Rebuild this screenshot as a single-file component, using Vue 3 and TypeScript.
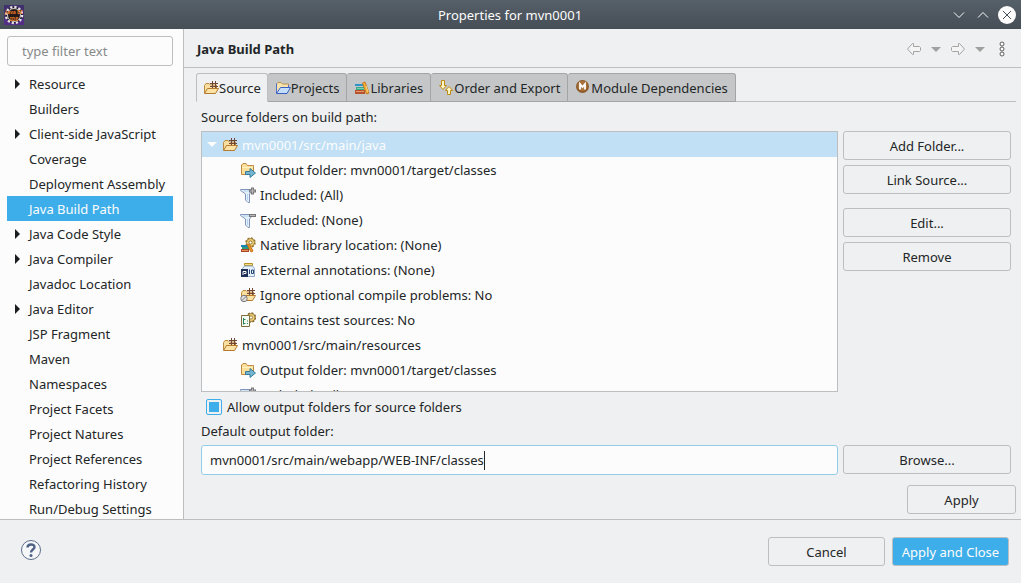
<script setup lang="ts">
import { ref } from 'vue'

interface Category {
  label: string
  expandable?: boolean
}

interface Tab {
  label: string
  icon: string
}

interface TreeRow {
  id: number
  label: string
  icon: string
  level: number
  open?: boolean
}

const categories: Category[] = [
  { label: 'Resource', expandable: true },
  { label: 'Builders' },
  { label: 'Client-side JavaScript', expandable: true },
  { label: 'Coverage' },
  { label: 'Deployment Assembly' },
  { label: 'Java Build Path' },
  { label: 'Java Code Style', expandable: true },
  { label: 'Java Compiler', expandable: true },
  { label: 'Javadoc Location' },
  { label: 'Java Editor', expandable: true },
  { label: 'JSP Fragment' },
  { label: 'Maven' },
  { label: 'Namespaces' },
  { label: 'Project Facets' },
  { label: 'Project Natures' },
  { label: 'Project References' },
  { label: 'Refactoring History' },
  { label: 'Run/Debug Settings' },
]

const tabs: Tab[] = [
  { label: 'Source', icon: 'source' },
  { label: 'Projects', icon: 'projects' },
  { label: 'Libraries', icon: 'books' },
  { label: 'Order and Export', icon: 'order' },
  { label: 'Module Dependencies', icon: 'module' },
]

const rows: TreeRow[] = [
  { id: 1, label: 'mvn0001/src/main/java', icon: 'source', level: 1, open: true },
  { id: 2, label: 'Output folder: mvn0001/target/classes', icon: 'output', level: 2 },
  { id: 3, label: 'Included: (All)', icon: 'included', level: 2 },
  { id: 4, label: 'Excluded: (None)', icon: 'excluded', level: 2 },
  { id: 5, label: 'Native library location: (None)', icon: 'native', level: 2 },
  { id: 6, label: 'External annotations: (None)', icon: 'annotations', level: 2 },
  { id: 7, label: 'Ignore optional compile problems: No', icon: 'ignore', level: 2 },
  { id: 8, label: 'Contains test sources: No', icon: 'tests', level: 2 },
  { id: 9, label: 'mvn0001/src/main/resources', icon: 'source', level: 1 },
  { id: 10, label: 'Output folder: mvn0001/target/classes', icon: 'output', level: 2 },
  { id: 11, label: 'Included: (All)', icon: 'included', level: 2 },
]

const filter = ref('')
const category = ref('Java Build Path')
const activeTab = ref('Source')
const selectedRow = ref(1)
const allowOutput = ref(true)
const outputFolder = ref('mvn0001/src/main/webapp/WEB-INF/classes')
</script>

<template>
  <div class="dialog">
    <svg class="defs" width="0" height="0" aria-hidden="true">
      <symbol id="i-source" viewBox="0 0 16 16">
        <path d="M1.500 13V5.500L3 3.500H6L7.500 5H13.500V9" fill="#f8dfa0" stroke="#bd8a3e" />
        <path d="M9.500 1V8M12.500 1V8M7 3.500H15M7 6.500H15" stroke="#70483a" fill="none" />
        <path d="M1.500 13.500L4.500 8.500H15.500L12.500 13.500Z" fill="#fbe3a6" stroke="#b37a30" />
      </symbol>
      <symbol id="i-projects" viewBox="0 0 16 16">
        <path d="M1.500 13V4L3 2.500H6L7.500 4H13.500V8" fill="#f6e3ad" stroke="#b9924e" />
        <path d="M1.500 3.500V13M13.500 5V8" stroke="#4d6fc4" fill="none" />
        <path d="M1.500 13.500L5.500 7.500H15.500L12 13.500Z" fill="#c5dffa" stroke="#3a5fc0" />
      </symbol>
      <symbol id="i-books" viewBox="0 0 16 16">
        <path d="M1 4H9V6H1Z" fill="#3192c8" />
        <path d="M2 7H10V10H2Z" fill="#36a88b" />
        <path d="M1 10H11V14H1Z" fill="#b5532f" />
        <path d="M2 11.500H10" stroke="#e99863" />
        <path d="M3 8.500H10" stroke="#7dd0ae" />
        <path d="M8.500 3L11 2L15 13L12.500 14Z" fill="#f2b13a" stroke="#c57b21" />
        <path d="M12 6L14 12" stroke="#f7d37a" />
      </symbol>
      <symbol id="i-order" viewBox="0 0 16 16">
        <path d="M3.500 .5H6.500V5.500H8.500L5 9.500L1.500 5.500H3.500Z" fill="#fff4c2" stroke="#bd8b18" />
        <path d="M9.500 14.500H12.500V10.500H14.800L11 6.500L7.300 10.500H9.500Z" fill="#fff4c2" stroke="#bd8b18" />
      </symbol>
      <symbol id="i-module" viewBox="0 0 16 16">
        <circle cx="7.500" cy="6.500" r="6.500" fill="#8d5a28" />
        <circle cx="7.500" cy="6" r="5" fill="#a9733c" />
        <path d="M5 9.500V4L7.500 7L10 4V9.500" fill="none" stroke="#fff" stroke-width="1.800" />
      </symbol>
      <symbol id="i-output" viewBox="0 0 16 16">
        <path d="M1.500 12.500V3L3 1.500H6L7.500 3.500H13.500V12.500Z" fill="#fbdf98" stroke="#c08b40" />
        <path d="M2 5.500H13" stroke="#fdf0c4" />
        <path d="M5.500 9.500H10V6.500L15.500 11L10 15.500V12.500H5.500Z" fill="#75b5d0" stroke="#397d9e" />
      </symbol>
      <symbol id="i-funnel" viewBox="0 0 16 16">
        <path d="M.5 2.500H12.500V3.500L9.500 7V15.500H8L5.500 13V7L.5 3.500Z" fill="#e4f0fb" stroke="#8294bb" />
        <path d="M7.500 7V13M3 4H9" stroke="#b4d4ee" fill="none" />
      </symbol>
      <symbol id="i-included" viewBox="0 0 16 16">
        <use href="#i-funnel" />
        <path d="M12.500 .5V7.500M9 4H16" stroke="#777" stroke-width="3" />
        <path d="M12.500 1.500V6.500M10 4H15" stroke="#b8b8b8" />
      </symbol>
      <symbol id="i-excluded" viewBox="0 0 16 16">
        <use href="#i-funnel" />
        <path d="M9 3.500H16" stroke="#777" stroke-width="3" />
        <path d="M10 3.500H15" stroke="#b8b8b8" />
      </symbol>
      <symbol id="i-native" viewBox="0 0 16 16">
        <circle cx="10.500" cy="5.500" r="4" fill="#ecd27c" stroke="#a5873f" />
        <circle cx="10.500" cy="5.500" r="4.600" fill="none" stroke="#94712c" stroke-width="1.300" stroke-dasharray="2 1.600" />
        <circle cx="10.500" cy="5.500" r="1.600" fill="#fff" stroke="#94712c" />
        <path d="M1 8H8V10H1Z" fill="#1d83b4" />
        <path d="M2 10H9V12H2Z" fill="#2d9e7c" />
        <path d="M1 12H9V15H1Z" fill="#a74527" />
        <path d="M2 13.500H8" stroke="#e6905b" />
        <path d="M7.500 8L9.500 7.500L13 14L11 15Z" fill="#ef9d24" stroke="#c66f15" />
      </symbol>
      <symbol id="i-annotations" viewBox="0 0 16 16">
        <path d="M4.500 3.500V1.500H12.500V3.500Z" fill="#f7e17d" stroke="#b49127" />
        <path d="M4.500 4H12.500L14.500 6.500V14.500H2.500V6.500Z" fill="#e7f1fb" stroke="#8ea7c5" />
        <path d="M1 7H8V15H1Z" fill="#1e3158" />
        <path d="M3 13V9.500H6V11.500H4" stroke="#fff" fill="none" />
        <path d="M9.500 7.500V12M11.500 8H13.500V11.500H11.500Z" stroke="#284775" fill="none" />
      </symbol>
      <symbol id="i-ignore" viewBox="0 0 16 16">
        <use href="#i-source" />
        <circle cx="4" cy="11.500" r="3.200" fill="#e3e3e3" stroke="#777" />
        <path d="M2 13.500L6 9.500" stroke="#777" />
      </symbol>
      <symbol id="i-tests" viewBox="0 0 16 16">
        <circle cx="11" cy="5.500" r="4" fill="#ecd27c" stroke="#a5873f" />
        <circle cx="11" cy="5.500" r="4.600" fill="none" stroke="#84642c" stroke-width="1.300" stroke-dasharray="2 1.600" />
        <circle cx="11" cy="5.500" r="1.600" fill="#fff" stroke="#a58237" />
        <path d="M1.500 3.500H9.500V14.500H1.500Z" fill="#f4fbf1" stroke="#7d6d3f" />
        <path d="M3.500 6V12.500M3.500 7.500H5.500M3.500 11.500H5.500M7 9H8M7 11.500H8" stroke="#26835b" fill="none" />
      </symbol>
    </svg>

    <header class="titlebar">
      <svg class="app-icon" width="20" height="20" viewBox="0 0 20 20" aria-hidden="true">
        <rect width="20" height="20" fill="#40306b" />
        <rect y="14" width="20" height="6" fill="#542d86" />
        <circle cx="10" cy="10" r="8" fill="#1d1a20" stroke="#e8e4e4" stroke-width="2.500" stroke-dasharray="2.200 2" />
        <circle cx="10" cy="10" r="6.500" fill="#241a1c" stroke="#d4cccc" />
        <text x="10" y="9" class="app-icon-text">Java EE</text>
        <text x="10" y="16" class="app-icon-text">IDE</text>
      </svg>
      <h1 class="title">Properties for mvn0001</h1>
      <div class="window-buttons">
        <button type="button" aria-label="Minimize">
          <svg width="18" height="18" viewBox="0 0 18 18"><path d="M4 6.500L9 11.500L14 6.500" /></svg>
        </button>
        <button type="button" aria-label="Maximize">
          <svg width="18" height="18" viewBox="0 0 18 18"><path d="M4 11.500L9 6.500L14 11.500" /></svg>
        </button>
        <button type="button" aria-label="Close">
          <svg width="18" height="18" viewBox="0 0 18 18">
            <circle cx="9" cy="9" r="9" fill="#fcfcfc" />
            <path class="cross" d="M5 5L13 13M13 5L5 13" />
          </svg>
        </button>
      </div>
    </header>

    <div class="body">
      <nav class="sidebar" aria-label="Property pages">
        <input v-model="filter" class="filter" type="text" placeholder="type filter text" aria-label="Filter" />
        <ul class="categories">
          <li v-for="item in categories" :key="item.label">
            <button
              type="button"
              class="category"
              :class="{ selected: item.label === category }"
              @click="category = item.label"
            >
              <span class="slot">
                <svg v-if="item.expandable" width="5" height="10" viewBox="0 0 5 10" aria-hidden="true">
                  <path d="M0 0L5 5L0 10Z" fill="#1b1e20" />
                </svg>
              </span>
              <span>{{ item.label }}</span>
            </button>
          </li>
        </ul>
      </nav>

      <main class="page">
        <div class="page-head">
          <h2>Java Build Path</h2>
          <div class="history">
            <button type="button" aria-label="Back">
              <svg width="16" height="14" viewBox="0 0 16 14">
                <path d="M1.500 7L6.500 1.500H7.500V4.500H13.500L14.500 5.500V8.500L13.500 9.500H7.500V12.500H6.500Z" fill="#f4f4f4" stroke="#a4a4a4" />
              </svg>
            </button>
            <button type="button" aria-label="Back history">
              <svg width="10" height="5" viewBox="0 0 10 5"><path d="M0 0H10L5 5Z" fill="#a0a0a0" /></svg>
            </button>
            <button type="button" aria-label="Forward">
              <svg width="16" height="14" viewBox="0 0 16 14">
                <path d="M14.500 7L9.500 1.500H8.500V4.500H2.500L1.500 5.500V8.500L2.500 9.500H8.500V12.500H9.500Z" fill="#f4f4f4" stroke="#a4a4a4" />
              </svg>
            </button>
            <button type="button" aria-label="Forward history">
              <svg width="10" height="5" viewBox="0 0 10 5"><path d="M0 0H10L5 5Z" fill="#a0a0a0" /></svg>
            </button>
            <button type="button" class="menu" aria-label="View menu">
              <svg width="6" height="16" viewBox="0 0 6 16" fill="#fff" stroke="#5c5c5c">
                <circle cx="3" cy="3" r="2" />
                <circle cx="3" cy="8" r="2" />
                <circle cx="3" cy="13" r="2" />
              </svg>
            </button>
          </div>
        </div>

        <div class="tabs" role="tablist">
          <button
            v-for="tab in tabs"
            :key="tab.label"
            type="button"
            role="tab"
            class="tab"
            :class="{ active: tab.label === activeTab }"
            :aria-selected="tab.label === activeTab"
            @click="activeTab = tab.label"
          >
            <svg width="16" height="16" aria-hidden="true"><use :href="'#i-' + tab.icon" /></svg>
            <span>{{ tab.label }}</span>
          </button>
        </div>

        <div class="panel" role="tabpanel">
          <p id="folders-label" class="caption">Source folders on build path:</p>
          <div class="split grow">
            <ul class="tree" role="tree" aria-labelledby="folders-label">
              <li
                v-for="row in rows"
                :key="row.id"
                role="treeitem"
                class="row"
                :class="['level-' + row.level, { selected: row.id === selectedRow }]"
                :aria-selected="row.id === selectedRow"
                @click="selectedRow = row.id"
              >
                <span v-if="row.level === 1" class="twisty">
                  <svg v-if="row.open" width="10" height="5" viewBox="0 0 10 5" aria-hidden="true">
                    <path d="M0 0H10L5 5Z" fill="#fcfcfc" />
                  </svg>
                </span>
                <svg class="row-icon" width="16" height="16" aria-hidden="true"><use :href="'#i-' + row.icon" /></svg>
                <span>{{ row.label }}</span>
              </li>
            </ul>
            <div class="actions">
              <button type="button" class="button">Add Folder...</button>
              <button type="button" class="button">Link Source...</button>
              <button type="button" class="button spaced">Edit...</button>
              <button type="button" class="button">Remove</button>
            </div>
          </div>

          <label class="check">
            <input v-model="allowOutput" type="checkbox" />
            <span>Allow output folders for source folders</span>
          </label>

          <label class="caption" for="output-folder">Default output folder:</label>
          <div class="split">
            <div class="field">
              <input id="output-folder" v-model="outputFolder" type="text" />
              <span class="caret" aria-hidden="true"></span>
            </div>
            <button type="button" class="button">Browse...</button>
          </div>
        </div>

        <div class="apply-bar">
          <button type="button" class="button">Apply</button>
        </div>
      </main>
    </div>

    <footer class="footer">
      <button type="button" class="help" aria-label="Help">
        <svg width="22" height="22" viewBox="0 0 22 22">
          <circle cx="11" cy="11" r="9.500" fill="#f5f7f9" stroke="#5b6e8c" />
          <path d="M7.500 8.500C7.500 4.500 14.500 4.500 14.500 8C14.500 10.500 11 10.500 11 13.500" fill="none" stroke="#4f6285" stroke-width="2.400" />
          <circle cx="11" cy="16.500" r="1.500" fill="#4f6285" />
        </svg>
      </button>
      <div class="footer-buttons">
        <button type="button" class="button">Cancel</button>
        <button type="button" class="button primary">Apply and Close</button>
      </div>
    </footer>
  </div>
</template>

<style>
body {
  margin: 0;
}
</style>

<style scoped>
.dialog {
  display: flex;
  flex-direction: column;
  height: 100vh;
  overflow: hidden;
  background: #eff0f1;
  color: #232627;
  font: 13px/18px "Noto Sans", sans-serif;
}

.dialog *,
.dialog *::before {
  box-sizing: border-box;
}

.defs {
  position: absolute;
}

button,
input {
  margin: 0;
  padding: 0;
  border: 0;
  background: none;
  color: inherit;
  font: inherit;
}

svg {
  display: block;
  flex: none;
}

ul {
  margin: 0;
  padding: 0;
  list-style: none;
}

h1,
h2,
p {
  margin: 0;
}

.titlebar {
  display: grid;
  grid-template-columns: 1fr auto 1fr;
  align-items: center;
  flex: none;
  height: 29px;
  padding: 0 5px 0 4px;
  background: linear-gradient(#566068, #464e56);
  color: #fcfcfc;
}

.app-icon-text {
  fill: #f07b1d;
  font-size: 5px;
  font-weight: 700;
  text-anchor: middle;
}

.title {
  font-size: 13px;
  font-weight: 400;
}

.window-buttons {
  display: flex;
  justify-content: flex-end;
  gap: 6px;
}

.window-buttons path {
  fill: none;
  stroke: #fcfcfc;
}

.window-buttons .cross {
  stroke: #475057;
}

.body {
  display: flex;
  flex: 1;
  min-height: 0;
}

.sidebar {
  flex: none;
  width: 184px;
  padding: 7px 10px 0 7px;
  overflow: hidden;
  border-right: 1px solid #bcbebf;
  background: #fcfcfc;
}

.filter {
  display: block;
  width: 100%;
  height: 30px;
  margin-bottom: 5px;
  padding: 0 14px;
  border: 1px solid #bcbebf;
  border-radius: 3px;
}

.filter::placeholder {
  color: #888a8b;
  opacity: 1;
}

.category {
  display: flex;
  align-items: center;
  width: 100%;
  height: 25px;
  text-align: left;
  white-space: nowrap;
}

.category.selected {
  background: #3daee9;
  color: #fcfcfc;
}

.slot {
  flex: none;
  width: 22px;
  padding-left: 8px;
}

.page {
  display: flex;
  flex: 1;
  flex-direction: column;
  min-width: 0;
}

.page-head {
  display: flex;
  align-items: center;
  justify-content: space-between;
  flex: none;
  height: 39px;
  padding: 2px 16px 0 13px;
  border-bottom: 1px solid #bcbebf;
}

.page-head h2 {
  font-size: 13px;
  font-weight: 700;
}

.history {
  display: flex;
  align-items: center;
  gap: 9px;
}

.menu {
  margin-left: 5px;
}

.tabs {
  display: flex;
  flex: none;
  height: 29px;
  margin: 5px 5px 0 12px;
  border-bottom: 1px solid #bcbebf;
}

.tab {
  display: flex;
  align-items: center;
  height: 29px;
  padding: 1px 7px 0;
  border: 1px solid #a3a4a5;
  border-left-width: 0;
  border-radius: 3px 3px 0 0;
  background: #c5c6c7;
  white-space: nowrap;
}

.tab.active {
  padding: 1px 6px 0;
  border-color: #bcbebf;
  border-bottom-color: #eff0f1;
  border-left-width: 1px;
  background: #eff0f1;
}

.panel {
  display: flex;
  flex: 1;
  flex-direction: column;
  min-height: 0;
  padding: 6px 10px 0 17px;
}

.caption {
  display: block;
  flex: none;
  height: 23px;
}

.split {
  display: grid;
  grid-template-columns: 1fr 168px;
  flex: none;
  gap: 5px;
}

.split.grow {
  flex: 1;
  min-height: 0;
}

.tree {
  min-height: 0;
  overflow: hidden;
  border: 1px solid #bcbebf;
  background: #fcfcfc;
}

.row {
  display: flex;
  align-items: center;
  height: 25px;
  white-space: nowrap;
}

.row.level-1 {
  padding-left: 5px;
}

.row.level-2 {
  padding-left: 38px;
}

.row.selected {
  background: #c1e0f5;
  color: #fcfcfc;
}

.twisty {
  flex: none;
  width: 15px;
}

.row-icon {
  margin-right: 4px;
}

.actions {
  display: flex;
  flex-direction: column;
  gap: 5px;
}

.button {
  height: 29px;
  border: 1px solid #bcbebf;
  border-radius: 3px;
  white-space: nowrap;
}

.button.spaced {
  margin-top: 9px;
}

.button.primary {
  background: #3daee9;
  color: #fcfcfc;
}

.check {
  display: flex;
  align-items: center;
  flex: none;
  gap: 5px;
  height: 30px;
  padding-left: 5px;
}

.check input {
  display: grid;
  place-items: center;
  width: 16px;
  height: 16px;
  border: 1px solid #3daee9;
  border-radius: 2px;
  appearance: none;
}

.check input:checked::before {
  width: 10px;
  height: 10px;
  background: #3daee9;
  content: "";
}

.field {
  display: flex;
  align-items: center;
  height: 30px;
  padding: 0 8px;
  border: 1px solid #93cee9;
  border-radius: 3px;
  background: #fcfcfc;
}

.field input {
  max-width: 100%;
  field-sizing: content;
  outline: none;
  caret-color: transparent;
}

.caret {
  flex: none;
  width: 1px;
  height: 19px;
  background: #232627;
}

.apply-bar {
  display: flex;
  justify-content: flex-end;
  flex: none;
  padding: 10px 5px 5px;
}

.apply-bar .button {
  width: 109px;
}

.footer {
  display: flex;
  align-items: center;
  justify-content: space-between;
  flex: none;
  height: 64px;
  padding: 0 12px 0 20px;
  border-top: 1px solid #bcbebf;
}

.help {
  margin-bottom: 4px;
}

.footer-buttons {
  display: flex;
  gap: 7px;
}

.footer-buttons .button {
  width: 117px;
}
</style>
